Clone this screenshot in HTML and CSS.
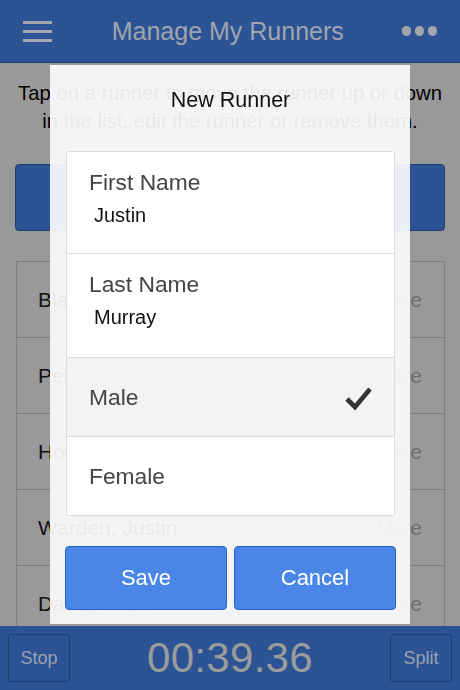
FILE: index.html
```html
<!DOCTYPE html>
<html>
<head>
<meta charset="utf-8">
<link rel="stylesheet" href="styles.css">
</head>
<body>
<div class="app">
  <header class="topbar">
    <div class="hamburger"><span></span><span></span><span></span></div>
    <h1 class="title">Manage My Runners</h1>
    <div class="dots"><span></span><span></span><span></span></div>
  </header>
  <main class="content">
    <p class="intro">Tap on a runner to move the runner up or down in the list, edit the runner or remove them.</p>
    <div class="add-btn">Add Runner</div>
    <ul class="runners">
      <li><span>Blake, Anna</span><span class="g">Female</span></li>
      <li><span>Peters, Sam</span><span class="g">Male</span></li>
      <li><span>Howard, Lily</span><span class="g">Female</span></li>
      <li><span>Warden, Justin</span><span class="g">Male</span></li>
      <li><span>Davis, Mark</span><span class="g">Male</span></li>
    </ul>
  </main>
  <footer class="bottombar">
    <div class="bar-btn">Stop</div>
    <div class="timer">00:39.36</div>
    <div class="bar-btn">Split</div>
  </footer>
</div>
<div class="modal">
  <h2 class="modal-title">New Runner</h2>
  <div class="form">
    <div class="field">
      <div class="label">First Name</div>
      <div class="value">Justin</div>
    </div>
    <div class="field field-last">
      <div class="label">Last Name</div>
      <div class="value">Murray</div>
    </div>
    <div class="option selected">
      <span class="label">Male</span>
      <svg class="check" width="30" height="26" viewBox="0 0 30 26"><polyline points="3,14 11,22 26,4" fill="none" stroke="#333" stroke-width="4.6" stroke-linejoin="miter" stroke-linecap="butt"/></svg>
    </div>
    <div class="option option-last">
      <span class="label">Female</span>
    </div>
  </div>
  <div class="actions">
    <button class="btn">Save</button>
    <button class="btn">Cancel</button>
  </div>
</div>
</body>
</html>
```

FILE: styles.css
```css
* { box-sizing: border-box; }
html, body { margin: 0; padding: 0; }
body {
  width: 460px;
  height: 690px;
  overflow: hidden;
  font-family: "Liberation Sans", Arial, sans-serif;
  background: #999999;
}
.app {
  display: flex;
  flex-direction: column;
  height: 690px;
  background: #999999;
}
.topbar {
  height: 63px;
  flex: none;
  background: #2c5394;
  border-bottom: 1px solid #1f3e72;
  display: flex;
  align-items: center;
  justify-content: space-between;
  padding: 0 23px 0 23px;
}
.hamburger {
  width: 29px;
  display: flex;
  flex-direction: column;
  gap: 6px;
  margin-top: 1px;
}
.hamburger span {
  display: block;
  height: 3px;
  background: #a3a6ac;
}
.title {
  margin: 0;
  font-size: 25px;
  font-weight: normal;
  color: #a0a5af;
  position: relative;
  left: 1px;
}
.dots {
  display: flex;
  gap: 3.5px;
}
.dots span {
  width: 9.5px;
  height: 9.5px;
  border-radius: 50%;
  background: #a3a6ac;
}
.content {
  flex: 1;
  padding: 16px 15px 0 15px;
  overflow: hidden;
}
.intro {
  margin: 0;
  text-align: center;
  font-size: 20.3px;
  line-height: 28px;
  color: #000;
}
.add-btn {
  margin-top: 29px;
  height: 67px;
  background: #2c5394;
  border: 1px solid #1d3c70;
  border-radius: 4px;
  color: #9ea3ad;
  font-size: 21px;
  display: flex;
  align-items: center;
  justify-content: center;
}
.runners {
  list-style: none;
  margin: 30px 0 0 1px;
  padding: 0;
  border: 1px solid #7f7f7f;
  border-bottom: none;
}
.runners li {
  height: 76px;
  border-bottom: 1px solid #7f7f7f;
  display: flex;
  align-items: center;
  justify-content: space-between;
  padding: 0 22px 0 21px;
  font-size: 21px;
  color: #111;
}
.runners .g { color: #6e6e6e; }
.bottombar {
  height: 64px;
  flex: none;
  background: #2c5394;
  display: flex;
  align-items: center;
  justify-content: space-between;
  padding: 0 8px 0 8px;
}
.bar-btn {
  height: 48px;
  border: 1px solid #1d3c70;
  border-radius: 3px;
  color: #9aa2b2;
  font-size: 18px;
  display: flex;
  align-items: center;
  justify-content: center;
  padding: 0 9px;
  min-width: 62px;
}
.timer {
  font-size: 42px;
  color: #9b9b9b;
  letter-spacing: 0.3px;
}
.modal {
  position: fixed;
  left: 50px;
  top: 65px;
  width: 360px;
  height: 559px;
  background: rgba(252, 252, 252, 0.92);
  padding: 0 14px 0 15px;
  display: flex;
  flex-direction: column;
}
.modal-title {
  margin: 22px 0 0 0;
  font-size: 21.5px;
  line-height: 26px;
  font-weight: normal;
  color: #111;
  text-align: center;
}
.form {
  margin: 38px 1px 0 1px;
  background: #fff;
  border: 1px solid #dcdcdc;
  border-radius: 3px;
  overflow: hidden;
}
.field {
  height: 102px;
  border-bottom: 1px solid #dcdcdc;
  padding: 16px 0 0 22px;
}
.field-last { height: 104px; }
.label {
  font-size: 22.8px;
  line-height: 28px;
  color: #444;
}
.value {
  margin: 7px 0 0 5px;
  font-size: 20px;
  line-height: 24px;
  color: #111;
}
.option {
  height: 79px;
  border-bottom: 1px solid #dcdcdc;
  display: flex;
  align-items: center;
  justify-content: space-between;
  padding: 0 20px 0 22px;
}
.option-last { border-bottom: none; height: 78px; }
.option.selected { background: #f3f3f3; }
.check { display: block; margin-top: 2px; }
.actions {
  margin-top: 30px;
  display: flex;
  gap: 7px;
}
.btn {
  flex: 1;
  height: 64px;
  background: #4a86e8;
  border: 1px solid #2a63c8;
  border-radius: 4px;
  color: #fff;
  font-family: "Liberation Sans", Arial, sans-serif;
  font-size: 22px;
  padding: 0;
}
```
